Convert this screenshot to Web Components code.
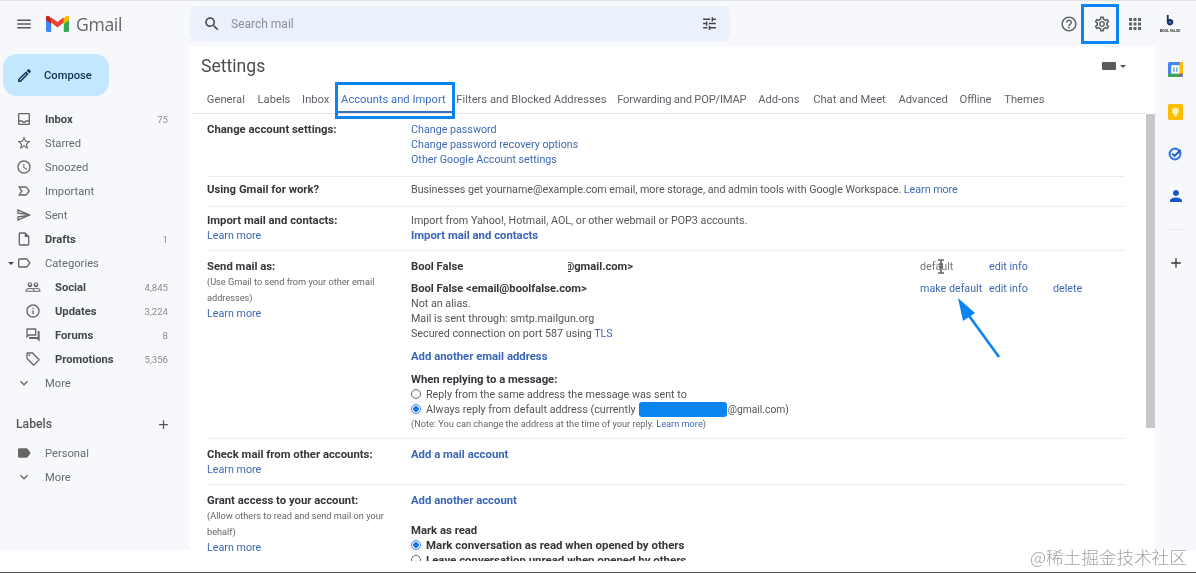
<!DOCTYPE html>
<html lang="en"><head><meta charset="utf-8"><title>Gmail Settings</title>
<style>
html,body{margin:0;padding:0;background:#fff;overflow:hidden}
body{font-family:Roboto,"Liberation Sans",sans-serif;font-size:11.2px;color:#555}
a{color:inherit;text-decoration:none}
</style></head><body>
<gm-app></gm-app>
<script>
const P={
menu:'M3 18h18v-2H3v2zm0-5h18v-2H3v2zm0-7v2h18V6H3z',
search:'M15.5 14h-.79l-.28-.27C15.41 12.59 16 11.11 16 9.5 16 5.91 13.09 3 9.5 3S3 5.91 3 9.5 5.91 16 9.5 16c1.61 0 3.09-.59 4.23-1.57l.27.28v.79l5 4.99L20.49 19l-4.99-5zm-6 0C7.01 14 5 11.99 5 9.5S7.01 5 9.5 5 14 7.01 14 9.5 11.99 14 9.5 14z',
tune:'M3 17v2h6v-2H3zM3 5v2h10V5H3zm10 16v-2h8v-2h-8v-2h-2v6h2zM7 9v2H3v2h4v2h2V9H7zm14 4v-2H11v2h10zm-6-4h2V7h4V5h-4V3h-2v6z',
help:'M11 18h2v-2h-2v2zm1-16C6.48 2 2 6.48 2 12s4.48 10 10 10 10-4.48 10-10S17.52 2 12 2zm0 18c-4.41 0-8-3.59-8-8s3.59-8 8-8 8 3.59 8 8-3.59 8-8 8zm0-14c-2.21 0-4 1.79-4 4h2c0-1.1.9-2 2-2s2 .9 2 2c0 2-3 1.75-3 5h2c0-2.25 3-2.5 3-5 0-2.21-1.79-4-4-4z',
gear:'M19.43 12.98c.04-.32.07-.64.07-.98 0-.34-.03-.66-.07-.98l2.11-1.65c.19-.15.24-.42.12-.64l-2-3.46c-.09-.16-.26-.25-.44-.25-.06 0-.12.01-.17.03l-2.49 1c-.52-.4-1.08-.73-1.69-.98l-.38-2.65C14.46 2.18 14.25 2 14 2h-4c-.25 0-.46.18-.49.42l-.38 2.65c-.61.25-1.17.59-1.69.98l-2.49-1c-.06-.02-.12-.03-.18-.03-.17 0-.34.09-.43.25l-2 3.46c-.13.22-.07.49.12.64l2.11 1.65c-.04.32-.07.65-.07.98 0 .33.03.66.07.98l-2.11 1.65c-.19.15-.24.42-.12.64l2 3.46c.09.16.26.25.44.25.06 0 .12-.01.17-.03l2.49-1c.52.4 1.08.73 1.69.98l.38 2.65c.03.24.24.42.49.42h4c.25 0 .46-.18.49-.42l.38-2.65c.61-.25 1.17-.59 1.69-.98l2.49 1c.06.02.12.03.18.03.17 0 .34-.09.43-.25l2-3.46c.12-.22.07-.49-.12-.64l-2.11-1.65zm-1.98-1.71c.04.31.05.52.05.73 0 .21-.02.43-.05.73l-.14 1.13.89.7 1.08.84-.7 1.21-1.27-.51-1.04-.42-.9.68c-.43.32-.84.56-1.25.73l-1.06.43-.16 1.13-.2 1.35h-1.4l-.19-1.35-.16-1.13-1.06-.43c-.43-.18-.83-.41-1.23-.71l-.91-.7-1.06.43-1.27.51-.7-1.21 1.08-.84.89-.7-.14-1.13c-.03-.31-.05-.54-.05-.74s.02-.43.05-.73l.14-1.13-.89-.7-1.08-.84.7-1.21 1.27.51 1.04.42.9-.68c.43-.32.84-.56 1.25-.73l1.06-.43.16-1.13.2-1.35h1.39l.19 1.35.16 1.13 1.06.43c.43.18.83.41 1.23.71l.91.7 1.06-.43 1.27-.51.7 1.21-1.07.85-.89.7.14 1.13zM12 8c-2.21 0-4 1.79-4 4s1.79 4 4 4 4-1.79 4-4-1.79-4-4-4zm0 6c-1.1 0-2-.9-2-2s.9-2 2-2 2 .9 2 2-.9 2-2 2z',
inbox:'M19 3H5c-1.1 0-2 .9-2 2v14c0 1.1.9 2 2 2h14c1.1 0 2-.9 2-2V5c0-1.1-.9-2-2-2zm0 16H5v-3h3.56c.69 1.19 1.97 2 3.44 2s2.75-.81 3.44-2H19v3zm0-5h-4.99c0 1.1-.9 2-2 2s-2-.9-2-2H5V5h14v9z',
star:'M22 9.24l-7.19-.62L12 2 9.19 8.63 2 9.24l5.46 4.73L5.82 21 12 17.27 18.18 21l-1.63-7.03L22 9.24zM12 15.4l-3.76 2.27 1-4.28-3.32-2.88 4.38-.38L12 6.1l1.71 4.04 4.38.38-3.32 2.88 1 4.28L12 15.4z',
clock:'M11.99 2C6.47 2 2 6.48 2 12s4.47 10 9.99 10C17.52 22 22 17.52 22 12S17.52 2 11.99 2zM12 20c-4.42 0-8-3.58-8-8s3.58-8 8-8 8 3.58 8 8-3.58 8-8 8zm.5-13H11v6l5.25 3.15.75-1.23-4.5-2.67z',
important:'M15 19H3l4.5-7L3 5h12c.65 0 1.26.31 1.63.84L21 12l-4.37 6.16c-.37.52-.98.84-1.63.84zm-8.5-2H15l3.5-5L15 7H6.5l3.5 5-3.5 5z',
send:'M4.01 6.03l7.51 3.22-7.52-1 .01-2.22m7.5 8.72L4 17.97v-2.22l7.51-1M2.01 3L2 10l15 2-15 2 .01 7L23 12 2.01 3z',
draft:'M14 2H6c-1.1 0-1.99.9-1.99 2L4 20c0 1.1.89 2 1.99 2H18c1.1 0 2-.9 2-2V8l-6-6zM6 20V4h7v5h5v11H6z',
label:'M17.63 5.84C17.27 5.33 16.67 5 16 5L5 5.01C3.9 5.01 3 5.9 3 7v10c0 1.1.9 1.99 2 1.99L16 19c.67 0 1.27-.33 1.63-.84L22 12l-4.37-6.16zM16 17H5V7h11l3.55 5L16 17z',
labelf:'M17.63 5.84C17.27 5.33 16.67 5 16 5L5 5.01C3.9 5.01 3 5.9 3 7v10c0 1.1.9 1.99 2 1.99L16 19c.67 0 1.27-.33 1.63-.84L22 12l-4.37-6.16z',
people:'M16.5 13c-1.2 0-3.07.34-4.5 1-1.43-.67-3.3-1-4.5-1C5.33 13 1 14.08 1 16.25V19h22v-2.75c0-2.17-4.33-3.25-6.5-3.25zm-4 4.5h-10v-1.25c0-.54 2.56-1.75 5-1.75s5 1.21 5 1.75v1.25zm9 0H14v-1.25c0-.46-.2-.86-.52-1.22.88-.3 1.96-.53 3.02-.53 2.44 0 5 1.21 5 1.75v1.25zM7.5 12c1.93 0 3.5-1.57 3.5-3.5S9.43 5 7.5 5 4 6.57 4 8.5 5.57 12 7.5 12zm0-5.5c.83 0 1.5.67 1.5 1.5s-.67 1.5-1.5 1.5S6 8.83 6 8s.67-1.5 1.5-1.5zm9 5.5c1.93 0 3.5-1.57 3.5-3.5S18.43 5 16.5 5 13 6.57 13 8.5s1.57 3.5 3.5 3.5zm0-5.5c.83 0 1.5.67 1.5 1.5s-.67 1.5-1.5 1.5S15 8.83 15 8s.67-1.5 1.5-1.5z',
info:'M11 7h2v2h-2zm0 4h2v6h-2zm1-9C6.48 2 2 6.48 2 12s4.48 10 10 10 10-4.48 10-10S17.52 2 12 2zm0 18c-4.41 0-8-3.59-8-8s3.59-8 8-8 8 3.59 8 8-3.59 8-8 8z',
forum:'M15 4v7H5.17L4 12.17V4h11m1-2H3c-.55 0-1 .45-1 1v14l4-4h10c.55 0 1-.45 1-1V3c0-.55-.45-1-1-1zm5 4h-2v9H6v2c0 .55.45 1 1 1h11l4 4V7c0-.55-.45-1-1-1z',
tag:'M21.41 11.58l-9-9C12.05 2.22 11.55 2 11 2H4c-1.1 0-2 .9-2 2v7c0 .55.22 1.05.59 1.42l9 9c.36.36.86.58 1.41.58s1.05-.22 1.41-.59l7-7c.37-.36.59-.86.59-1.41s-.23-1.06-.59-1.42zM13 20.01L4 11V4h7v-.01l9 9-7 7.02zM6.5 5a1.5 1.5 0 1 0 0 3 1.5 1.5 0 1 0 0-3z',
expand:'M16.59 8.59L12 13.17 7.41 8.59 6 10l6 6 6-6z',
add:'M19 13h-6v6h-2v-6H5v-2h6V5h2v6h6v2z',
pencil:'M14.06 9.02l.92.92L5.92 19H5v-.92l9.06-9.06M17.66 3c-.25 0-.51.1-.7.29l-1.83 1.83 3.75 3.75 1.83-1.83c.39-.39.39-1.02 0-1.41l-2.34-2.34c-.2-.2-.45-.29-.71-.29zm-3.6 3.19L3 17.25V21h3.75L17.81 9.94l-3.75-3.75z',
person:'M12 12c2.21 0 4-1.79 4-4s-1.79-4-4-4-4 1.79-4 4 1.79 4 4 4zm0 2c-2.67 0-8 1.34-8 4v2h16v-2c0-2.66-5.33-4-8-4z',
apps:'M4 8h4V4H4zm6 0h4V4h-4zm6-4v4h4V4zM4 14h4v-4H4zm6 0h4v-4h-4zm6 0h4v-4h-4zM4 20h4v-4H4zm6 0h4v-4h-4zm6 0h4v-4h-4z'
};
function def(name,html){
  customElements.define(name,class extends HTMLElement{
    constructor(){super();this.attachShadow({mode:'open'});}
    connectedCallback(){ if(this._d)return; this._d=1;
      this.shadowRoot.innerHTML=typeof html==='function'?html(this):html; }
  });
}
def('gm-icon',el=>{const s=el.getAttribute('size')||17;
 return `<style>:host{display:inline-flex;flex:none;width:${s}px;height:${s}px;color:inherit}svg{display:block;width:100%;height:100%;fill:currentColor}</style>
 <svg viewBox="0 0 24 24"><path d="${P[el.getAttribute('name')]}"/></svg>`;});

def('gm-topbar',`<style>
:host{display:flex;align-items:center;height:45px;border-top:1px solid #e2e3e8;background:#f6f8fc;color:#5f6368;box-sizing:content-box}
.menu{margin-left:15px;color:#555;margin-right:13px}
.logo{display:block;width:23px;height:17px;margin-right:7px}
.word{font:400 17.6px "Open Sans",Roboto,sans-serif;letter-spacing:-.35px;color:#666;width:114px}
.search{width:540px;height:35px;box-sizing:border-box;background:#eaf1fb;border-radius:7px;display:flex;align-items:center;padding:0 12px 0 13px;color:#444}
.search span{margin-left:10px;font-size:12px;color:#8a8f96;flex:1}
.right{display:flex;align-items:center;margin-left:auto}
.right gm-icon{color:#5f6368}
.av{width:26px;height:26px;margin:0 13px 0 13px;display:flex;flex-direction:column;align-items:center;color:#1c2b57}
.av svg{width:10px;height:12px;display:block;margin-top:4px}
.av b{font:700 3.6px Roboto,sans-serif;color:#333;white-space:nowrap;margin-top:2px}
</style>
<gm-icon class="menu" name="menu" size="18"></gm-icon>
<svg class="logo" viewBox="0 0 23 17"><path fill="#4285f4" d="M0 2.5V15.2c0 1 .8 1.8 1.7 1.8H5.2V7.6z"/><path fill="#34a853" d="M23 2.5V15.2c0 1-.8 1.8-1.7 1.8H17.8V7.6z"/><path fill="#ea4335" d="M5.2 7.6V2.2L11.5 7l6.3-4.8v5.4l-6.3 4.8z"/><path fill="#c5221f" d="M0 2.5v2.6l5.2 3.9V3.4L3 1.2C1.6 .1 0 1 0 2.5z"/><path fill="#fbbc04" d="M17.8 3.2V9L23 5.1V2.5C23 1 21.4.1 20 1.2z"/></svg>
<span class="word">Gmail</span>
<div class="search"><gm-icon name="search" size="18"></gm-icon><span>Search mail</span><gm-icon name="tune" size="17"></gm-icon></div>
<div class="right">
<gm-icon name="help" size="18"></gm-icon>
<gm-icon name="gear" size="18" style="margin-left:15px"></gm-icon>
<gm-icon name="apps" size="18" style="margin-left:15px"></gm-icon>
<div class="av"><svg viewBox="0 0 13 17"><path fill="#1c2b57" d="M2 0h2.6v6A4.6 4.6 0 1 1 2 10.2z"/><circle cx="6.5" cy="10.2" r="1.8" fill="#3c7be0"/></svg><b>BOOL FALSE</b></div>
</div>`);

def('gm-compose',`<style>
:host{display:flex;align-items:center;width:106px;height:42px;margin-left:3px;box-sizing:border-box;padding-left:13px;background:#c2e7ff;border-radius:14px;color:#0b3350;font-weight:500;font-size:11.2px}
gm-icon{margin-right:11px}
</style><gm-icon name="pencil" size="17"></gm-icon><slot></slot>`);

def('gm-nav',el=>{
 const sub=el.hasAttribute('sub'),bold=el.hasAttribute('bold'),c=el.getAttribute('count')||'';
 const caret=el.hasAttribute('caret');
 const ic=el.getAttribute('icon');const s=el.getAttribute('isize')||16;
 return `<style>
 :host{display:flex;align-items:center;height:24px;padding-left:${sub?25:16}px;width:168px;box-sizing:border-box;position:relative;color:#666b70;font-weight:${bold?700:400};${bold?'color:#43474b;':''}}
 .i{width:16px;height:16px;display:flex;align-items:center;justify-content:center;margin-right:${sub?14:13}px;color:#666}
 .t{flex:1;white-space:nowrap}
 .c{font-size:9.6px;font-weight:400;color:#8c8c8c}
 .car{position:absolute;left:8px;top:10.5px;width:0;height:0;border:3px solid transparent;border-top:3.6px solid #444;border-bottom:0}
 </style>${caret?'<span class="car"></span>':''}<span class="i"><gm-icon name="${ic}" size="${s}"></gm-icon></span><span class="t"><slot></slot></span><span class="c">${c}</span>`;});

def('gm-sidebar',`<style>
:host{display:block;background:#f6f8fc;height:504px;padding-top:8px;box-sizing:border-box;color:#5f6368}
.list{margin-top:11px}
.lab{display:flex;align-items:center;justify-content:space-between;width:171px;box-sizing:border-box;padding:0 0 0 16px;height:24px;margin-top:17px;font-size:12.2px;font-weight:500;color:#555;margin-bottom:5px}
</style>
<gm-compose>Compose</gm-compose>
<div class="list">
<gm-nav icon="inbox" bold count="75">Inbox</gm-nav>
<gm-nav icon="star">Starred</gm-nav>
<gm-nav icon="clock">Snoozed</gm-nav>
<gm-nav icon="important">Important</gm-nav>
<gm-nav icon="send">Sent</gm-nav>
<gm-nav icon="draft" bold count="1">Drafts</gm-nav>
<gm-nav icon="label" caret>Categories</gm-nav>
<gm-nav icon="people" sub bold count="4,845">Social</gm-nav>
<gm-nav icon="info" sub bold count="3,224">Updates</gm-nav>
<gm-nav icon="forum" sub bold count="8">Forums</gm-nav>
<gm-nav icon="tag" sub bold count="5,356">Promotions</gm-nav>
<gm-nav icon="expand">More</gm-nav>
</div>
<div class="lab"><span>Labels</span><gm-icon name="add" size="15"></gm-icon></div>
<gm-nav icon="labelf">Personal</gm-nav>
<gm-nav icon="expand">More</gm-nav>`);

def('gm-tab',el=>`<style>
:host{display:flex;align-items:center;height:28px;padding:0 5.85px;color:#5f6368;white-space:nowrap;box-sizing:border-box;${el.hasAttribute('active')?'color:#3a6fc4;border-bottom:2px solid #3a6fc4;padding-top:2px;':''}}
</style><slot></slot>`);

def('gm-row',`<style>
:host{display:grid;grid-template-columns:204px 1fr;width:918px;box-sizing:border-box;padding:7.5px 0;border-bottom:1px solid #ececef;line-height:15px;font-size:10.72px}
</style><div><slot name="l"></slot></div><div><slot name="r"></slot></div>`);

def('gm-radio',el=>`<style>
:host{display:flex;align-items:center;height:15px;white-space:nowrap}
i{display:block;box-sizing:border-box;width:10px;height:10px;border-radius:50%;margin:0 5px 0 0;border:1px solid #666;background:#fff}
${el.hasAttribute('on')?'i{border-color:#3a7de0;background:radial-gradient(circle,#1a73e8 0 2.6px,#fff 3.1px)}':''}
</style><i></i><span><slot></slot></span>`);

def('gm-address',`<style>
:host{display:flex;line-height:15px}
.n{width:509px;white-space:nowrap}
.a{width:69px}
.b{width:64px}
</style><div class="n"><slot></slot></div><div class="a"><slot name="a1"></slot></div><div class="b"><slot name="a2"></slot></div><div><slot name="a3"></slot></div>`);

def('gm-settings',`<style>
:host{display:grid;grid-template-columns:1fr 9px;grid-template-rows:auto 1fr;background:#fff;border-radius:12px 12px 0 0;height:515px;overflow:hidden}
.head{grid-column:1/3;height:68px;box-sizing:border-box;position:relative}
.title{padding:10px 0 0 12px;font-size:17.6px;line-height:21px;color:#4a4d50;height:21px}
.tabs{display:flex;position:absolute;left:12px;top:39px;font-size:11.2px}
.line{position:absolute;left:3px;right:9px;bottom:0;height:1px;background:#e6e6ea}
.density{position:absolute;right:29px;top:16px;display:flex;align-items:center;color:#555}
.density i{display:block;width:14px;height:8px;background:#5c5c5c;border-radius:1px;margin-right:4px}
.density u{display:block;border:3px solid transparent;border-top:3.6px solid #555;border-bottom:0}
.body{padding-left:18px;overflow:hidden;min-width:0}
.thumb{width:9px;height:314px;background:#c8c8c8}
b{color:#33363a;font-weight:700;font-size:11.32px}
.ad b{font-size:11.2px}
gm-radio b{font-size:11.45px}
.s{font-size:9.2px;line-height:16px;color:#666}
.ln{color:#3f69b5}
.bl{color:#3b66b5;font-weight:700;font-size:11.32px}
.d{display:block}
.hide{display:inline-block;width:105px;height:14px;background:#fff;margin-right:-4px;position:relative;vertical-align:top}
.red{display:inline-block;width:88px;height:15px;background:#0a84f0;border-radius:3px;margin:0 1px 0 3px;vertical-align:top}
.gm{font-size:10.3px}
</style>
<div class="head">
  <div class="title">Settings</div>
  <div class="density"><i></i><u></u></div>
  <div class="line"></div>
  <div class="tabs">
   <gm-tab>General</gm-tab><gm-tab style="margin-left:1px">Labels</gm-tab><gm-tab>Inbox</gm-tab><gm-tab active>Accounts and Import</gm-tab><gm-tab style="margin-left:-1px">Filters and Blocked Addresses</gm-tab><gm-tab style="margin-left:-1px;letter-spacing:-.2px">Forwarding and POP/IMAP</gm-tab><gm-tab>Add-ons</gm-tab><gm-tab style="margin-left:2px">Chat and Meet</gm-tab><gm-tab style="margin-left:1px">Advanced</gm-tab><gm-tab>Offline</gm-tab><gm-tab style="margin-left:1px">Themes</gm-tab>
  </div>
</div>
<div class="body">
<gm-row style="padding-bottom:9.5px"><div slot="l"><b>Change account settings:</b></div>
 <div slot="r"><a class="ln d">Change password</a><a class="ln d">Change password recovery options</a><a class="ln d">Other Google Account settings</a></div></gm-row>
<gm-row style="padding:4.5px 0 9.5px"><div slot="l"><b>Using Gmail for work?</b></div>
 <div slot="r" style="letter-spacing:-.03px">Businesses get yourname@example.com email, more storage, and admin tools with Google Workspace. <a class="ln">Learn more</a></div></gm-row>
<gm-row style="padding-top:5.5px"><div slot="l"><b>Import mail and contacts:</b><a class="ln d">Learn more</a></div>
 <div slot="r">Import from Yahoo!, Hotmail, AOL, or other webmail or POP3 accounts.<a class="bl d">Import mail and contacts</a></div></gm-row>
<gm-row><div slot="l"><b>Send mail as:</b><div class="s">(Use Gmail to send from your other email<br>addresses)</div><a class="ln d">Learn more</a></div>
 <div slot="r">
  <gm-address class="ad"><b>Bool False<span class="hide"></span>@gmail.com&gt;</b><span slot="a1" style="color:#777">default</span><a slot="a2" class="ln">edit info</a></gm-address>
  <gm-address class="ad" style="margin-top:7px"><b>Bool False &lt;email@boolfalse.com&gt;</b><a slot="a1" class="ln">make default</a><a slot="a2" class="ln">edit info</a><a slot="a3" class="ln">delete</a></gm-address>
  <div>Not an alias.</div><div>Mail is sent through: smtp.mailgun.org</div><div>Secured connection on port 587 using <a class="ln">TLS</a></div>
  <a class="bl d" style="margin-top:8px">Add another email address</a>
  <div style="margin-top:8px"><b>When replying to a message:</b></div>
  <gm-radio>Reply from the same address the message was sent to</gm-radio>
  <gm-radio on>Always reply from default address (currently<span class="red"></span><span class="gm">@gmail.com)</span></gm-radio>
  <div class="s" style="line-height:14px">(Note: You can change the address at the time of your reply. <a class="ln">Learn more</a>)</div>
 </div></gm-row>
<gm-row><div slot="l"><b>Check mail from other accounts:</b><a class="ln d">Learn more</a></div>
 <div slot="r"><a class="bl d">Add a mail account</a></div></gm-row>
<gm-row style="border:0"><div slot="l"><b>Grant access to your account:</b><div class="s">(Allow others to read and send mail on your<br>behalf)</div><a class="ln d">Learn more</a></div>
 <div slot="r"><a class="bl d">Add another account</a>
  <div style="margin-top:15px"><b>Mark as read</b></div>
  <gm-radio on><b>Mark conversation as read when opened by others</b></gm-radio>
  <gm-radio><b>Leave conversation unread when opened by others</b></gm-radio>
 </div></gm-row>
</div>
<div class="thumb"></div>`);

def('gm-rail',`<style>
:host{display:flex;flex-direction:column;align-items:center;background:#f6f8fc;height:504px;box-sizing:border-box;padding:16px 0 0 0;color:#222}
svg{display:block}
hr{border:0;border-top:1px solid #e6e8ee;width:14px;margin:24px 0 0}
</style>
<svg width="15" height="15" viewBox="0 0 15 15" style="margin-right:1px"><rect width="15" height="15" rx="1.5" fill="#4285f4"/><rect x="3.2" y="3.2" width="8.6" height="8.6" fill="#fff"/><path fill="#fbbc04" d="M11.8 0H15v11.8h-3.2z"/><path fill="#34a853" d="M0 11.8h11.8V15H1.5A1.5 1.5 0 0 1 0 13.5z"/><path fill="#ea4335" d="M11.8 11.8H15L11.8 15z"/><rect x="5" y="5.3" width="1.8" height="4.6" fill="#8db4f5"/><rect x="8" y="5.3" width="1.8" height="4.6" fill="#8db4f5"/></svg>
<svg width="15" height="16" viewBox="0 0 15 16" style="margin:27px 1px 0 0"><rect width="15" height="16" rx="1.5" fill="#fbbc04"/><circle cx="7.5" cy="7" r="3.4" fill="#fff3b0"/><rect x="5.8" y="10.4" width="3.4" height="1.8" fill="#fff3b0"/></svg>
<svg width="14" height="14" viewBox="0 0 14 14" style="margin:27px 1px 0 0"><circle cx="7" cy="7" r="5.4" fill="none" stroke="#3d7ce6" stroke-width="2.2"/><path d="M4.2 6.6 6.6 9l6-6" fill="none" stroke="#1a56c4" stroke-width="1.8"/></svg>
<gm-icon name="person" size="18" style="margin-top:26px;color:#1557c8"></gm-icon>
<hr>
<gm-icon name="add" size="16" style="margin-top:25px;color:#333"></gm-icon>`);

def('gm-annotations',`<style>
:host{position:absolute;inset:0;pointer-events:none;display:block}
.b{position:absolute;box-sizing:border-box;border:3px solid #0a84f0}
svg{position:absolute}
.w{position:absolute;left:1030px;top:546px;font:300 17.6px "Noto Sans CJK SC",sans-serif;line-height:22px;color:#a3a3a3;white-space:nowrap}
</style>
<div class="b" style="left:1081px;top:4px;width:38px;height:40px"></div>
<div class="b" style="left:335px;top:82px;width:120px;height:37px"></div>
<svg style="left:950px;top:292px" width="56" height="70" viewBox="0 0 56 70"><path d="M49 65 17 21" stroke="#0a84f0" stroke-width="2.6" fill="none"/><path d="M8 6 25 21 13 29z" fill="#0a84f0"/></svg>
<svg style="left:936px;top:259px" width="10" height="15" viewBox="0 0 10 15"><path d="M2 1h6M5 1v13M2 14h6M3 5h4M3 8h4" stroke="#666" stroke-width="1.6" fill="none"/></svg>
<div class="w">@稀土掘金技术社区</div>`);

def('gm-app',`<style>
:host{display:block;position:relative;width:1196px;height:573px;overflow:hidden;background:#fff;filter:blur(.45px)}
.main{display:grid;grid-template-columns:189px 966px 41px;height:526px}
.foot{height:2px;background:#555}
</style>
<gm-topbar></gm-topbar>
<div class="main"><gm-sidebar></gm-sidebar><gm-settings></gm-settings><gm-rail></gm-rail></div>
<div class="foot"></div>
<gm-annotations></gm-annotations>`);
</script>
</body></html>
